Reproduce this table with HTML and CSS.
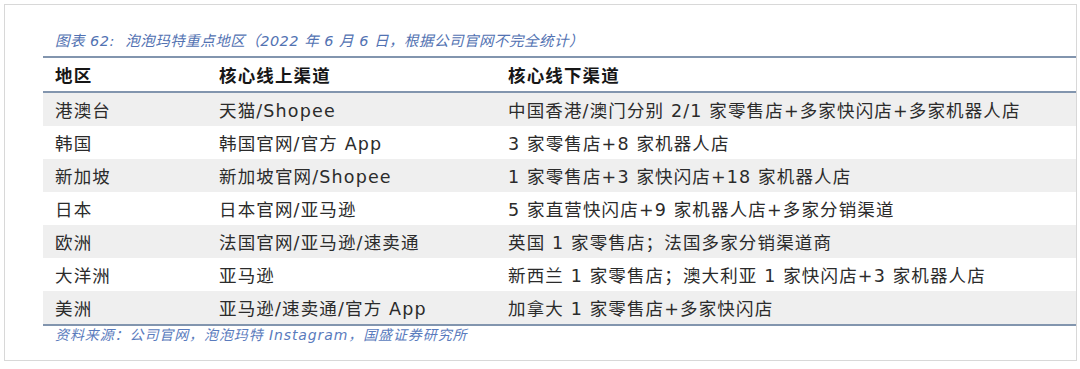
FILE: index.html
```html
<!DOCTYPE html>
<html lang="zh-CN">
<head>
<meta charset="utf-8">
<title>泡泡玛特重点地区</title>
<link rel="stylesheet" href="styles.css">
</head>
<body>
<div class="frame">
  <div class="caption">图表 62:&nbsp; 泡泡玛特重点地区（2022 年 6 月 6 日，根据公司官网不完全统计）</div>
  <div class="table">
    <div class="row head">
      <div class="cell">地区</div>
      <div class="cell">核心线上渠道</div>
      <div class="cell">核心线下渠道</div>
    </div>
    <div class="row shade">
      <div class="cell">港澳台</div>
      <div class="cell">天猫/Shopee</div>
      <div class="cell">中国香港/澳门分别 2/1 家零售店+多家快闪店+多家机器人店</div>
    </div>
    <div class="row">
      <div class="cell">韩国</div>
      <div class="cell">韩国官网/官方 App</div>
      <div class="cell">3 家零售店+8 家机器人店</div>
    </div>
    <div class="row shade">
      <div class="cell">新加坡</div>
      <div class="cell">新加坡官网/Shopee</div>
      <div class="cell">1 家零售店+3 家快闪店+18 家机器人店</div>
    </div>
    <div class="row">
      <div class="cell">日本</div>
      <div class="cell">日本官网/亚马逊</div>
      <div class="cell">5 家直营快闪店+9 家机器人店+多家分销渠道</div>
    </div>
    <div class="row shade">
      <div class="cell">欧洲</div>
      <div class="cell">法国官网/亚马逊/速卖通</div>
      <div class="cell">英国 1 家零售店；法国多家分销渠道商</div>
    </div>
    <div class="row">
      <div class="cell">大洋洲</div>
      <div class="cell">亚马逊</div>
      <div class="cell">新西兰 1 家零售店；澳大利亚 1 家快闪店+3 家机器人店</div>
    </div>
    <div class="row shade last">
      <div class="cell">美洲</div>
      <div class="cell">亚马逊/速卖通/官方 App</div>
      <div class="cell">加拿大 1 家零售店+多家快闪店</div>
    </div>
  </div>
  <div class="source">资料来源：公司官网，泡泡玛特 Instagram，国盛证券研究所</div>
</div>
</body>
</html>
```

FILE: styles.css
```css
html, body {
  margin: 0;
  padding: 0;
  background: #ffffff;
}

body {
  padding: 4px;
  font-family: "DejaVu Sans", "Noto Sans CJK SC", sans-serif;
  color: #2b2b2b;
}

.frame {
  box-sizing: border-box;
  width: 1073px;
  height: 357px;
  border: 1px solid #d8d8d8;
  padding: 27px 0 0 38px;
}

.caption {
  font-style: italic;
  font-size: 14.5px;
  line-height: 18px;
  color: #5272b2;
  padding-left: 12px;
  height: 24px;
  letter-spacing: 0.5px;
}

.table {
  border-top: 2px solid #8295ae;
  border-bottom: 2px solid #8295ae;
}

.row {
  display: grid;
  grid-template-columns: 164px 289px 1fr;
  height: 33px;
  align-items: center;
  font-size: 17.5px;
  letter-spacing: 1.15px;
}

.row.head {
  height: 33px;
  font-weight: bold;
  color: #161616;
  border-bottom: 2px solid #8295ae;
}

.row.shade {
  background: #efefef;
}

.cell {
  padding-left: 12px;
  white-space: nowrap;
}

.source {
  font-style: italic;
  font-size: 14px;
  line-height: 18px;
  color: #5a7bbd;
  padding: 0 0 0 12px;
  letter-spacing: 0.9px;
}
```
